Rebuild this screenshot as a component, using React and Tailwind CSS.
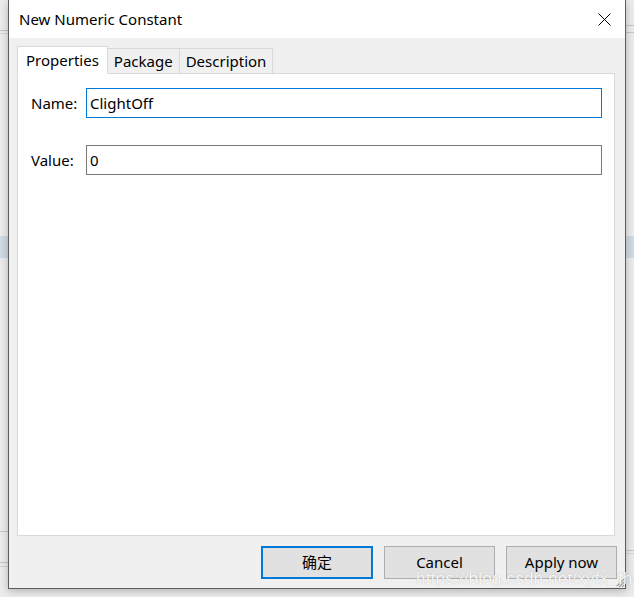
import React from "react";

const font = { fontFamily: '"Noto Sans", "Noto Sans CJK SC", sans-serif' };

function Tab({ label, active }) {
  if (active) {
    return (
      <div className="h-[28px] -mb-px px-[8px] bg-white border border-[#d9d9d9] border-b-white flex items-center text-[15px] text-black z-10">
        {label}
      </div>
    );
  }
  return (
    <div className="h-[25px] -ml-px px-[6px] bg-[#f0f0f0] border border-[#d9d9d9] border-b-0 flex items-center text-[15px] text-black">
      {label}
    </div>
  );
}

function Button({ children, primary }) {
  return (
    <div
      className={
        "h-[33px] flex items-center justify-center text-[15px] text-black bg-[#e1e1e1] " +
        (primary ? "w-[112px] border-2 border-[#0078d7]" : "w-[111px] border border-[#adadad]")
      }
    >
      {children}
    </div>
  );
}

export default function App() {
  return (
    <div className="relative w-[634px] h-[597px] bg-[#ececec] overflow-hidden" style={font}>
      {/* background app decorations */}
      <div className="absolute left-0 top-[30px] w-[10px] h-px bg-[#c4c4c4]" />
      <div className="absolute left-0 top-[33px] w-[10px] h-px bg-[#d4d4d4]" />
      <div className="absolute left-0 top-[236px] w-[10px] h-[22px] bg-[#cfdbe5]" />
      <div className="absolute left-0 top-[531px] w-[10px] h-px bg-[#c8c8c8]" />
      <div className="absolute left-0 top-[562px] w-[10px] h-px bg-[#c8c8c8]" />
      <div className="absolute left-0 top-[566px] w-[10px] h-px bg-[#d4d4d4]" />
      <div className="absolute right-0 top-[25px] w-[10px] h-px bg-[#c4c4c4]" />
      <div className="absolute right-0 top-[32px] w-[10px] h-px bg-[#c4c4c4]" />
      <div className="absolute right-0 top-[236px] w-[10px] h-[22px] bg-[#cfdbe5]" />
      <div className="absolute right-0 top-[550px] w-[10px] h-px bg-[#c8c8c8]" />
      <div className="absolute right-0 top-[553px] w-[10px] h-px bg-[#d4d4d4]" />

      {/* window */}
      <div className="absolute left-[8px] top-0 w-[618px] h-[589px] border border-t-0 border-[#5c5c5c] bg-[#f0f0f0] flex flex-col shadow-[0_2px_8px_rgba(0,0,0,0.25)]">
        {/* title bar */}
        <div className="h-[38px] bg-white flex items-center justify-between pl-[10px] pr-[14px]">
          <span className="text-[15px] text-black">New Numeric Constant</span>
          <svg width="13" height="13" viewBox="0 0 13 13" className="mt-[1px]">
            <path d="M0.5 0.5 L12.5 12.5 M12.5 0.5 L0.5 12.5" stroke="#000" strokeWidth="1" fill="none" />
          </svg>
        </div>

        {/* body */}
        <div className="flex-1 flex flex-col pl-[8px] pr-[10px] pt-[8px]">
          <div className="flex items-end h-[27px]">
            <Tab label="Properties" active />
            <Tab label="Package" />
            <Tab label="Description" />
          </div>
          <div className="h-[463px] bg-white border border-[#d9d9d9] pt-[14px] pl-[13px] pr-[12px] flex flex-col">
            <div className="flex items-center h-[30px]">
              <span className="w-[55px] text-[15px] text-black">Name:</span>
              <div className="flex-1 h-[30px] border border-[#0078d7] flex items-center px-[3px] text-[15px] text-black">
                ClightOff
              </div>
            </div>
            <div className="flex items-center h-[30px] mt-[27px]">
              <span className="w-[55px] text-[15px] text-black">Value:</span>
              <div className="flex-1 h-[30px] border border-[#7a7a7a] flex items-center px-[3px] text-[15px] text-black">
                0
              </div>
            </div>
          </div>
          <div className="flex justify-end gap-[11px] mt-[10px] -mr-[2px]">
            <Button primary>确定</Button>
            <Button>Cancel</Button>
            <Button>Apply now</Button>
          </div>
        </div>

        {/* resize grip */}
        <svg width="10" height="10" viewBox="0 0 10 10" className="absolute right-0 bottom-0">
          <path d="M9 1 L1 9 M9 4 L4 9 M9 7 L7 9" stroke="#a0a0a0" strokeWidth="1.2" fill="none" />
        </svg>
      </div>

      {/* watermark */}
      <div className="absolute left-[416px] top-[566px] text-[17px] text-white/90 tracking-[0.2px] [text-shadow:0_0_1px_rgba(120,120,120,0.6)]" style={{ fontFamily: '"Liberation Sans", sans-serif' }}>
        https://blog.csdn.net/xyfx_fhw
      </div>
    </div>
  );
}
